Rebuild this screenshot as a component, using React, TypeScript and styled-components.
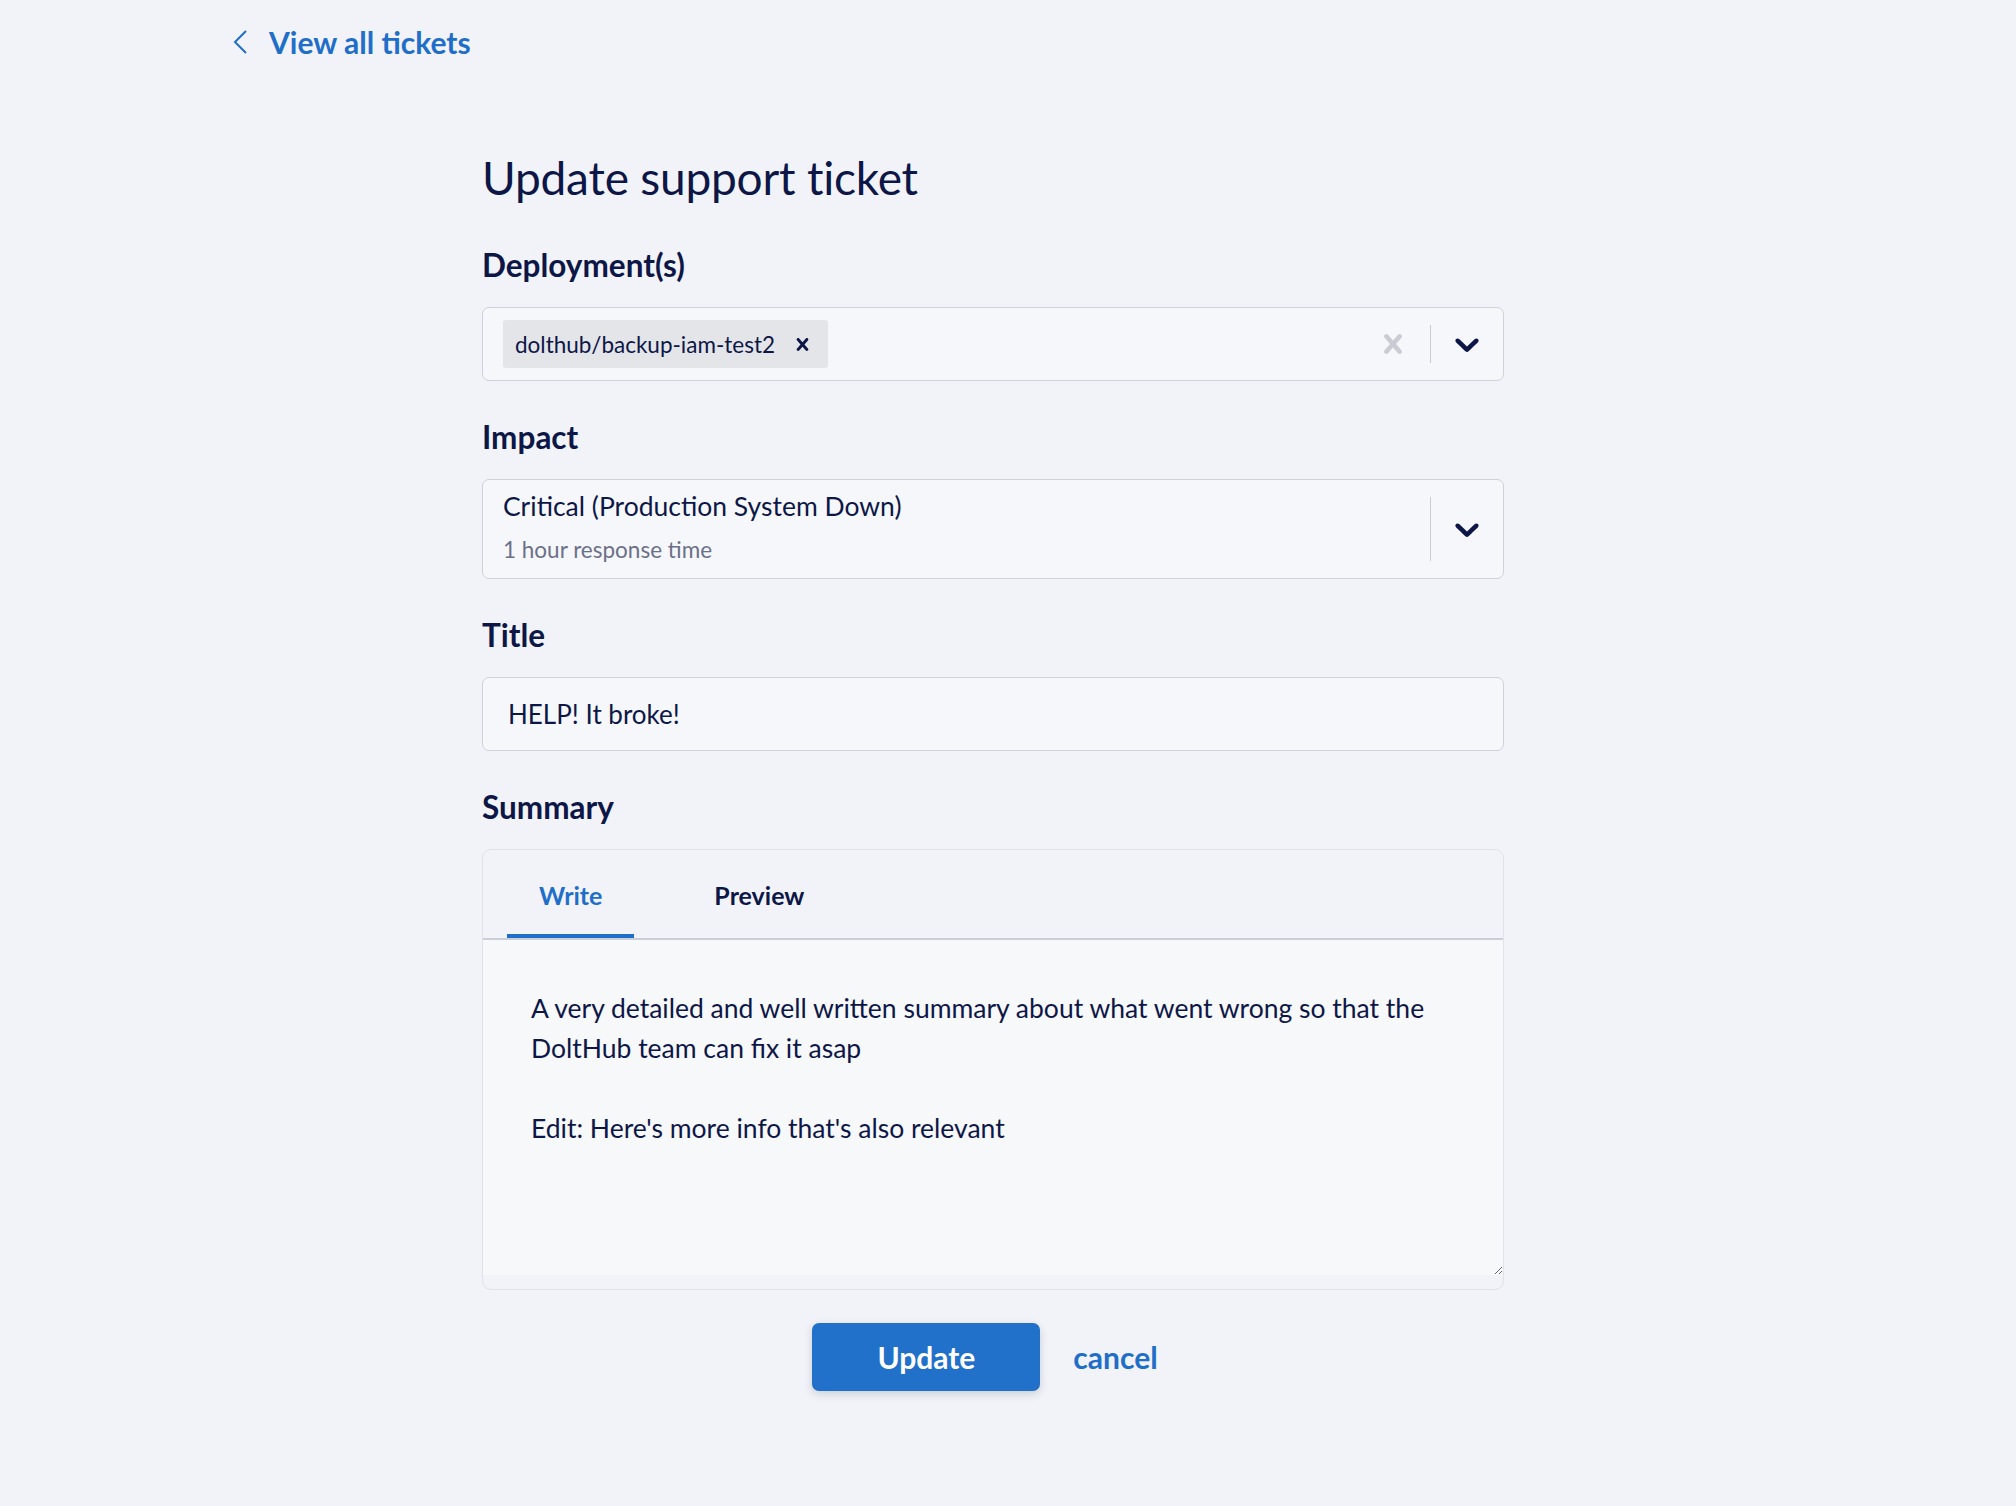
import * as React from 'react'
import styled, { createGlobalStyle } from 'styled-components'

const NAVY = '#0d1747'
const BLUE = '#1f6ec8'
const FONT = `'Source Sans Pro', Lato, 'Noto Sans', sans-serif`

const GlobalStyle = createGlobalStyle`
  html, body {
    margin: 0;
    padding: 0;
    background: #f2f3f8;
  }
  body {
    font-family: ${FONT};
    color: ${NAVY};
  }
  * {
    box-sizing: border-box;
  }
`

const StyledPage = styled.div`
  min-height: 100vh;
  padding-bottom: 80px;
`

const StyledBackBar = styled.div`
  padding: 18px 0 0 232px;
`

const StyledBackLink = styled.a`
  display: inline-flex;
  align-items: center;
  gap: 21px;
  height: 48px;
  font-size: 30px;
  font-weight: 700;
  color: ${BLUE};
  text-decoration: none;
  cursor: pointer;

  svg {
    display: block;
  }
`

const StyledForm = styled.form`
  width: 1022px;
  margin: 82px 0 0 482px;
`

const StyledTitle = styled.h1`
  margin: 0 0 42px;
  font-size: 46px;
  font-weight: 400;
  line-height: 60px;
  letter-spacing: -0.2px;
`

const StyledField = styled.div<{ $last?: boolean }>`
  margin-bottom: ${p => (p.$last ? 0 : 41)}px;
`

const StyledLabel = styled.label`
  display: block;
  margin-bottom: 27px;
  font-size: 31.5px;
  font-weight: 700;
  line-height: 30px;
`

const StyledControl = styled.div<{ $height: number }>`
  display: flex;
  align-items: stretch;
  height: ${p => p.$height}px;
  border: 1px solid #cdd1d9;
  border-radius: 7px;
  background: #f6f7fa;
`

const StyledValueArea = styled.div<{ $padLeft: number }>`
  flex: 1;
  display: flex;
  align-items: center;
  padding-left: ${p => p.$padLeft}px;
  min-width: 0;
`

const StyledChip = styled.div`
  display: flex;
  align-items: center;
  height: 48px;
  padding-left: 12px;
  border-radius: 3px;
  background: #e4e5e9;
  font-size: 22.5px;
`

const StyledChipRemove = styled.span`
  display: flex;
  align-items: center;
  padding: 0 13px 0 15px;
  color: ${NAVY};
`

const StyledClear = styled.span`
  display: flex;
  align-items: center;
  justify-content: center;
  width: 40px;
  margin-right: 17px;
  color: #c9ccd4;
`

const StyledSeparator = styled.span<{ $inset: number }>`
  width: 1px;
  margin: ${p => p.$inset}px 0;
  background: #c9ccd4;
`

const StyledDropdown = styled.span`
  display: flex;
  align-items: center;
  justify-content: center;
  width: 72px;
  color: ${NAVY};
`

const StyledOption = styled.div`
  padding-bottom: 4px;
`

const StyledOptionMain = styled.div`
  font-size: 26.5px;
  line-height: 34px;
`

const StyledOptionSub = styled.div`
  margin-top: 12px;
  font-size: 22.5px;
  line-height: 30px;
  color: #6b7089;
`

const StyledInput = styled.input`
  display: block;
  width: 100%;
  height: 74px;
  padding: 0 25px;
  border: 1px solid #cdd1d9;
  border-radius: 7px;
  background: #f6f7fa;
  font-family: ${FONT};
  font-size: 26px;
  color: ${NAVY};
  outline: none;
`

const StyledEditor = styled.div`
  border: 1px solid #e0e2e7;
  border-radius: 9px;
  background: #f2f3f8;
  padding-bottom: 14px;
  overflow: hidden;
`

const StyledTabs = styled.div`
  display: flex;
  gap: 48px;
  padding-left: 24px;
  border-bottom: 2px solid #c9ced8;
`

const StyledTab = styled.button<{ $active?: boolean }>`
  height: 88px;
  padding: 6px 32px 0;
  border: none;
  border-bottom: 4px solid ${p => (p.$active ? BLUE : 'transparent')};
  background: none;
  font-family: ${FONT};
  font-size: 25px;
  font-weight: 700;
  color: ${p => (p.$active ? BLUE : NAVY)};
  cursor: pointer;
`

const StyledTextarea = styled.textarea`
  display: block;
  width: 100%;
  height: 335px;
  padding: 48px 48px;
  border: none;
  background: #f7f8fa;
  font-family: ${FONT};
  font-size: 26.5px;
  line-height: 40px;
  color: ${NAVY};
  resize: vertical;
  outline: none;
`

const StyledActions = styled.div`
  display: flex;
  justify-content: center;
  align-items: center;
  gap: 33px;
  margin-top: 33px;
  padding-right: 16px;
`

const StyledButton = styled.button`
  width: 228px;
  height: 68px;
  border: none;
  border-radius: 7px;
  background: #2170c9;
  box-shadow: 0 3px 8px rgba(30, 40, 80, 0.18);
  font-family: ${FONT};
  font-size: 30px;
  font-weight: 700;
  color: #fff;
  cursor: pointer;
`

const StyledCancel = styled.a`
  font-size: 30px;
  font-weight: 700;
  color: ${BLUE};
  cursor: pointer;
`

const ChevronDown: React.FC = () => (
  <svg width='40' height='40' viewBox='0 0 20 20' fill='currentColor'>
    <path d='M4.516 7.548c0.436-0.446 1.043-0.481 1.576 0l3.908 3.747 3.908-3.747c0.533-0.481 1.141-0.446 1.574 0 0.436 0.445 0.408 1.197 0 1.615-0.406 0.418-4.695 4.502-4.695 4.502-0.217 0.223-0.502 0.335-0.787 0.335s-0.57-0.112-0.789-0.335c0 0-4.287-4.084-4.695-4.502s-0.436-1.17 0-1.615z' />
  </svg>
)

const Cross: React.FC<{ size: number }> = ({ size }) => (
  <svg width={size} height={size} viewBox='0 0 20 20' fill='currentColor'>
    <path d='M14.348 14.849c-0.469 0.469-1.229 0.469-1.697 0l-2.651-3.030-2.651 3.029c-0.469 0.469-1.229 0.469-1.697 0-0.469-0.469-0.469-1.229 0-1.697l2.758-3.150-2.759-3.152c-0.469-0.469-0.469-1.228 0-1.697s1.228-0.469 1.697 0l2.652 3.031 2.651-3.031c0.469-0.469 1.228-0.469 1.697 0s0.469 1.229 0 1.697l-2.758 3.152 2.758 3.150c0.469 0.469 0.469 1.229 0 1.698z' />
  </svg>
)

const summary =
  'A very detailed and well written summary about what went wrong so that the DoltHub team can fix it asap\n\nEdit: Here\'s more info that\'s also relevant'

const App: React.FC = () => (
  <StyledPage>
    <GlobalStyle />
    <StyledBackBar>
      <StyledBackLink>
        <svg width='16' height='26' viewBox='0 0 16 26' fill='none' stroke='currentColor' strokeWidth='2'>
          <polyline points='14,2 3,13 14,24' />
        </svg>
        View all tickets
      </StyledBackLink>
    </StyledBackBar>

    <StyledForm onSubmit={e => e.preventDefault()}>
      <StyledTitle>Update support ticket</StyledTitle>

      <StyledField>
        <StyledLabel>Deployment(s)</StyledLabel>
        <StyledControl $height={74}>
          <StyledValueArea $padLeft={20}>
            <StyledChip>
              dolthub/backup-iam-test2
              <StyledChipRemove>
                <Cross size={25} />
              </StyledChipRemove>
            </StyledChip>
          </StyledValueArea>
          <StyledClear>
            <Cross size={38} />
          </StyledClear>
          <StyledSeparator $inset={17} />
          <StyledDropdown>
            <ChevronDown />
          </StyledDropdown>
        </StyledControl>
      </StyledField>

      <StyledField>
        <StyledLabel>Impact</StyledLabel>
        <StyledControl $height={100}>
          <StyledValueArea $padLeft={20}>
            <StyledOption>
              <StyledOptionMain>Critical (Production System Down)</StyledOptionMain>
              <StyledOptionSub>1 hour response time</StyledOptionSub>
            </StyledOption>
          </StyledValueArea>
          <StyledSeparator $inset={17} />
          <StyledDropdown>
            <ChevronDown />
          </StyledDropdown>
        </StyledControl>
      </StyledField>

      <StyledField>
        <StyledLabel>Title</StyledLabel>
        <StyledInput defaultValue='HELP! It broke!' />
      </StyledField>

      <StyledField $last>
        <StyledLabel>Summary</StyledLabel>
        <StyledEditor>
          <StyledTabs>
            <StyledTab type='button' $active>Write</StyledTab>
            <StyledTab type='button'>Preview</StyledTab>
          </StyledTabs>
          <StyledTextarea defaultValue={summary} />
        </StyledEditor>
      </StyledField>

      <StyledActions>
        <StyledButton type='submit'>Update</StyledButton>
        <StyledCancel>cancel</StyledCancel>
      </StyledActions>
    </StyledForm>
  </StyledPage>
)

export default App
